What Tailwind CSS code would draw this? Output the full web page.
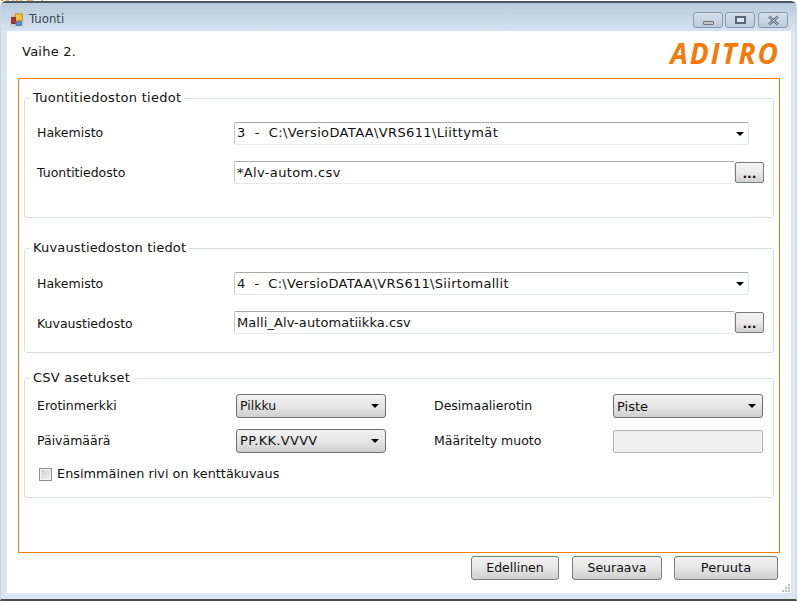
<!DOCTYPE html>
<html lang="en">
<head>
  <meta charset="utf-8" />
  <title>Tuonti</title>
  <script src="https://cdn.jsdelivr.net/npm/@tailwindcss/browser@4"></script>
</head>
<body class="w-[797px] h-[601px] overflow-hidden bg-white font-['DejaVu_Sans',sans-serif] text-[12.5px] text-[#111]">
  <div class="w-[797px] h-[601px] flex flex-col">
    <!-- Bits of the window behind, along the very top -->
    <div class="h-px flex">
      <div class="w-[2px] ml-[1px] bg-[#f47c00]"></div>
      <div class="w-[3px] ml-[3px] bg-[#f9a64d]"></div>
      <div class="w-[2px] ml-[3px] bg-[#f9a64d]"></div>
      <div class="w-[2px] ml-[2px] bg-[#f9a64d]"></div>
      <div class="w-[2px] ml-[2px] bg-[#f9a64d]"></div>
      <div class="w-[6px] ml-[5px] bg-[#f9a64d]"></div>
      <div class="w-[2px] ml-[8px] bg-[#f9a64d]"></div>
    </div>
    <!-- Window frame -->
    <div class="flex-1 flex flex-col rounded-t-[6px] border-t-2 border-l border-r border-b-2 border-t-[#4a5560] border-l-[#c8d4e0] border-r-[#c8d4e0] border-b-[#4a4a4a] bg-[#dae6f3]">
      <!-- Title bar -->
      <div class="h-[28px] flex items-start justify-between pl-[9px] pr-[8px] bg-gradient-to-b from-[#b9cadb] to-[#d6e3f1]">
        <div class="flex items-start gap-[5px] pt-[8px]">
          <svg class="mt-[2px]" width="14" height="14" viewBox="0 0 16 16">
            <rect x="0.5" y="0.5" width="15" height="15" fill="#c8ccd2" />
            <rect x="6" y="1" width="8" height="8" fill="#f3c53a" stroke="#b98a1c" />
            <rect x="2" y="5" width="4" height="7" fill="#b8302a" stroke="#7a1f1a" />
            <rect x="7" y="10" width="6" height="4" fill="#5f8ed8" stroke="#3c62a5" />
          </svg>
          <span class="text-[11.7px] leading-[16px] text-[#3c4654]">Tuonti</span>
        </div>
        <div class="flex">
          <div class="w-[30px] h-[16px] mt-[9px] rounded-[3px] border border-[#8a97a6] bg-gradient-to-b from-[#d4dfea] to-[#bccbda] flex items-center justify-center pt-[5px]">
            <div class="w-[11px] h-[4px] rounded-[1px] bg-[#c6c6c6] border border-[#70757c]"></div>
          </div>
          <div class="w-[30px] h-[16px] mt-[9px] ml-[2px] rounded-[3px] border border-[#8a97a6] bg-gradient-to-b from-[#d4dfea] to-[#bccbda] flex items-center justify-center">
            <div class="w-[11px] h-[8px] border-2 border-[#5a6674] bg-[#dde6ef]"></div>
          </div>
          <div class="w-[30px] h-[16px] mt-[9px] ml-[3px] rounded-[3px] border border-[#8a97a6] bg-gradient-to-b from-[#d4dfea] to-[#bccbda] flex items-center justify-center">
            <svg width="13" height="11" viewBox="0 0 13 11"><path d="M2 1.5 L11 9.5 M11 1.5 L2 9.5" stroke="#4e5a68" stroke-width="2.4" /><path d="M2 1.5 L11 9.5 M11 1.5 L2 9.5" stroke="#f2f5f8" stroke-width="0.9" /></svg>
          </div>
        </div>
      </div>

      <!-- Client area -->
      <div class="relative flex-1 ml-[6px] mr-[5px] mb-[6px] bg-white flex flex-col">
        <div class="h-[47px] flex items-start justify-between pl-[15px] pr-[11px]">
          <span class="mt-[13px] leading-[16px] text-[13px] tracking-[0.25px]">Vaihe 2.</span>
          <span class="mt-[6px] text-[28px] leading-[32px] font-bold italic tracking-[2px] text-[#f47a0a] font-['Open_Sans',sans-serif]">ADITRO</span>
        </div>

        <!-- Orange panel -->
        <div class="mx-[11px] h-[475px] border-[1.5px] border-[#f47c00] px-[5px] pt-[19px]">
          <!-- Tuontitiedoston tiedot -->
          <div class="relative h-[120px] border border-[#d5dfe5] rounded-[3px] pt-[23px] pl-[12px]">
            <span class="absolute -top-[9px] left-[5px] bg-white px-[3px] leading-[16px] text-[13px] tracking-[0.28px]">Tuontitiedoston tiedot</span>
            <div class="flex items-center h-[23px]">
              <span class="w-[197px] pb-px">Hakemisto</span>
              <div class="w-[515px] h-[23px] flex items-center justify-between pl-[2px] pr-[3px] border border-[#e3e9ef] border-t-[#a9a9a9] border-l-[#c8c8c8] rounded-[2px]">
                <span class="text-[13px] tracking-[0.37px] pb-px">3&nbsp; -&nbsp; C:\VersioDATAA\VRS611\Liittymät</span>
                <div class="w-0 h-0 border-x-[4px] border-x-transparent border-t-[4px] border-t-black mr-[1px]"></div>
              </div>
            </div>
            <div class="flex items-center h-[23px] mt-[16px]">
              <span class="w-[197px] pt-[2px]">Tuontitiedosto</span>
              <div class="w-[501px] h-[23px] flex items-center pl-[2px] border border-[#e3e9ef] border-t-[#a9a9a9] border-l-[#c8c8c8] rounded-[2px] text-[13px] tracking-[0.36px]">*Alv-autom.csv</div>
              <div class="w-[29px] h-[21px] flex items-center justify-center rounded-[2px] border border-[#7c7c7c] bg-gradient-to-b from-[#f2f2f2] via-[#ebebeb] to-[#d0d0d0] font-bold leading-none pt-[4px]">...</div>
            </div>
          </div>

          <!-- Kuvaustiedoston tiedot -->
          <div class="relative h-[105px] mt-[30px] border border-[#d5dfe5] rounded-[3px] pt-[23px] pl-[12px]">
            <span class="absolute -top-[9px] left-[5px] bg-white px-[3px] leading-[16px] text-[13px] tracking-[0.15px]">Kuvaustiedoston tiedot</span>
            <div class="flex items-center h-[23px]">
              <span class="w-[197px] pt-px">Hakemisto</span>
              <div class="w-[515px] h-[23px] flex items-center justify-between pl-[2px] pr-[3px] border border-[#e3e9ef] border-t-[#a9a9a9] border-l-[#c8c8c8] rounded-[2px]">
                <span class="text-[13px] tracking-[0.3px]">4&nbsp; -&nbsp; C:\VersioDATAA\VRS611\Siirtomallit</span>
                <div class="w-0 h-0 border-x-[4px] border-x-transparent border-t-[4px] border-t-black mr-[1px]"></div>
              </div>
            </div>
            <div class="flex items-center h-[23px] mt-[16px]">
              <span class="w-[197px] pt-[3px]">Kuvaustiedosto</span>
              <div class="w-[501px] h-[23px] flex items-center pl-[2px] border border-[#e3e9ef] border-t-[#a9a9a9] border-l-[#c8c8c8] rounded-[2px] text-[13px] tracking-[0.08px]">Malli_Alv-automatiikka.csv</div>
              <div class="w-[29px] h-[21px] flex items-center justify-center rounded-[2px] border border-[#7c7c7c] bg-gradient-to-b from-[#f2f2f2] via-[#ebebeb] to-[#d0d0d0] font-bold leading-none pt-[4px]">...</div>
            </div>
          </div>

          <!-- CSV asetukset -->
          <div class="relative h-[120px] mt-[25px] border border-[#d5dfe5] rounded-[3px] pt-[15px] pl-[12px]">
            <span class="absolute -top-[9px] left-[5px] bg-white px-[3px] leading-[16px] text-[13px] tracking-[0.25px]">CSV asetukset</span>
            <div class="flex items-center h-[24px]">
              <span class="w-[199px]">Erotinmerkki</span>
              <div class="w-[150px] h-[24px] flex items-center justify-between pl-[3px] pr-[6px] rounded-[3px] border border-[#6f6f6f] bg-gradient-to-b from-[#f2f2f2] via-[#e6e6e6] to-[#cfcfcf]">
                <span class="pt-px">Pilkku</span>
                <div class="w-0 h-0 border-x-[4px] border-x-transparent border-t-[4px] border-t-black"></div>
              </div>
              <span class="w-[179px] ml-[48px]">Desimaalierotin</span>
              <div class="w-[150px] h-[24px] flex items-center justify-between pl-[3px] pr-[6px] rounded-[3px] border border-[#6f6f6f] bg-gradient-to-b from-[#f2f2f2] via-[#e6e6e6] to-[#cfcfcf]">
                <span class="text-[13px] pt-px">Piste</span>
                <div class="w-0 h-0 border-x-[4px] border-x-transparent border-t-[4px] border-t-black"></div>
              </div>
            </div>
            <div class="flex items-center h-[24px] mt-[11px]">
              <span class="w-[199px]">Päivämäärä</span>
              <div class="w-[150px] h-[24px] flex items-center justify-between pl-[3px] pr-[6px] rounded-[3px] border border-[#6f6f6f] bg-gradient-to-b from-[#f2f2f2] via-[#e6e6e6] to-[#cfcfcf]">
                <span class="text-[13px] tracking-[0.3px]">PP.KK.VVVV</span>
                <div class="w-0 h-0 border-x-[4px] border-x-transparent border-t-[4px] border-t-black"></div>
              </div>
              <span class="w-[179px] ml-[48px]">Määritelty muoto</span>
              <div class="w-[150px] h-[23px] rounded-[2px] border border-[#b5b5b5] bg-[#eeeeee]"></div>
            </div>
            <div class="flex items-center h-[14px] mt-[14px] pl-[2px] gap-[5px]">
              <div class="w-[13px] h-[13px] border border-[#8e8f8f] bg-gradient-to-br from-[#cfcfcf] to-[#f0f0f0] shadow-[inset_0_0_0_1px_#f4f4f4]"></div>
              <span class="text-[12.8px] tracking-[0.04px]">Ensimmäinen rivi on kenttäkuvaus</span>
            </div>
          </div>
        </div>

        <!-- Buttons -->
        <div class="flex justify-end mt-[3px] pr-[13px]">
          <div class="w-[88px] h-[24px] flex items-center justify-center rounded-[3px] border border-[#7c7c7c] bg-gradient-to-b from-[#f2f2f2] via-[#e6e6e6] to-[#cfcfcf]">Edellinen</div>
          <div class="w-[90px] h-[24px] ml-[13px] flex items-center justify-center rounded-[3px] border border-[#7c7c7c] bg-gradient-to-b from-[#f2f2f2] via-[#e6e6e6] to-[#cfcfcf]">Seuraava</div>
          <div class="w-[104px] h-[24px] ml-[12px] flex items-center justify-center rounded-[3px] border border-[#7c7c7c] bg-gradient-to-b from-[#f2f2f2] via-[#e6e6e6] to-[#cfcfcf] text-[13px]">Peruuta</div>
        </div>

        <!-- Size grip -->
        <svg class="absolute right-0 bottom-0" width="10" height="10" viewBox="0 0 10 10" fill="#b8bec4">
          <rect x="7" y="1" width="2" height="2" /><rect x="4" y="4" width="2" height="2" /><rect x="7" y="4" width="2" height="2" />
          <rect x="1" y="7" width="2" height="2" /><rect x="4" y="7" width="2" height="2" /><rect x="7" y="7" width="2" height="2" />
        </svg>
      </div>
    </div>
  </div>
</body>
</html>
